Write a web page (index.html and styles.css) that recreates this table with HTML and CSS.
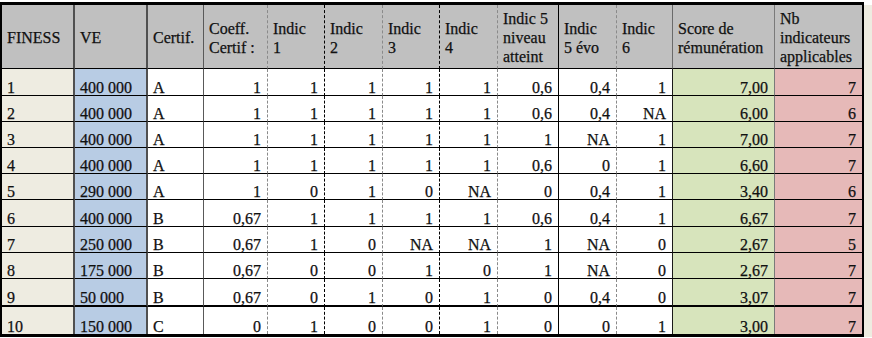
FILE: index.html
```html
<!DOCTYPE html>
<html lang="fr">
<head>
<meta charset="utf-8">
<title>Tableau FINESS</title>
<link rel="stylesheet" href="styles.css">
</head>
<body>
<div class="page">
  <table class="grid">
    <colgroup>
      <col class="w-finess"><col class="w-ve"><col class="w-cert"><col class="w-coeff">
      <col class="w-i1"><col class="w-i2"><col class="w-i3"><col class="w-i4">
      <col class="w-i5n"><col class="w-i5e"><col class="w-i6"><col class="w-score"><col class="w-nb">
    </colgroup>
    <thead>
      <tr class="head">
        <th class="c1">FINESS</th>
        <th class="c2">VE</th>
        <th class="c3">Certif.</th>
        <th class="c4">Coeff.<br>Certif :</th>
        <th class="c5">Indic<br>1</th>
        <th class="c6">Indic<br>2</th>
        <th class="c7">Indic<br>3</th>
        <th class="c8">Indic<br>4</th>
        <th class="c9">Indic 5<br>niveau<br>atteint</th>
        <th class="c10">Indic<br>5 évo</th>
        <th class="c11">Indic<br>6</th>
        <th class="c12">Score de<br>rémunération</th>
        <th class="c13">Nb<br>indicateurs<br>applicables</th>
      </tr>
    </thead>
    <tbody>
      <tr class="r-tall"><td class="c1">1</td><td class="c2">400 000</td><td class="c3">A</td><td class="c4 num">1</td><td class="c5 num">1</td><td class="c6 num">1</td><td class="c7 num">1</td><td class="c8 num">1</td><td class="c9 num">0,6</td><td class="c10 num">0,4</td><td class="c11 num">1</td><td class="c12 num">7,00</td><td class="c13 num">7</td></tr>
      <tr><td class="c1">2</td><td class="c2">400 000</td><td class="c3">A</td><td class="c4 num">1</td><td class="c5 num">1</td><td class="c6 num">1</td><td class="c7 num">1</td><td class="c8 num">1</td><td class="c9 num">0,6</td><td class="c10 num">0,4</td><td class="c11 num">NA</td><td class="c12 num">6,00</td><td class="c13 num">6</td></tr>
      <tr><td class="c1">3</td><td class="c2">400 000</td><td class="c3">A</td><td class="c4 num">1</td><td class="c5 num">1</td><td class="c6 num">1</td><td class="c7 num">1</td><td class="c8 num">1</td><td class="c9 num">1</td><td class="c10 num">NA</td><td class="c11 num">1</td><td class="c12 num">7,00</td><td class="c13 num">7</td></tr>
      <tr><td class="c1">4</td><td class="c2">400 000</td><td class="c3">A</td><td class="c4 num">1</td><td class="c5 num">1</td><td class="c6 num">1</td><td class="c7 num">1</td><td class="c8 num">1</td><td class="c9 num">0,6</td><td class="c10 num">0</td><td class="c11 num">1</td><td class="c12 num">6,60</td><td class="c13 num">7</td></tr>
      <tr><td class="c1">5</td><td class="c2">290 000</td><td class="c3">A</td><td class="c4 num">1</td><td class="c5 num">0</td><td class="c6 num">1</td><td class="c7 num">0</td><td class="c8 num">NA</td><td class="c9 num">0</td><td class="c10 num">0,4</td><td class="c11 num">1</td><td class="c12 num">3,40</td><td class="c13 num">6</td></tr>
      <tr class="r-tall"><td class="c1">6</td><td class="c2">400 000</td><td class="c3">B</td><td class="c4 num">0,67</td><td class="c5 num">1</td><td class="c6 num">1</td><td class="c7 num">1</td><td class="c8 num">1</td><td class="c9 num">0,6</td><td class="c10 num">0,4</td><td class="c11 num">1</td><td class="c12 num">6,67</td><td class="c13 num">7</td></tr>
      <tr><td class="c1">7</td><td class="c2">250 000</td><td class="c3">B</td><td class="c4 num">0,67</td><td class="c5 num">1</td><td class="c6 num">0</td><td class="c7 num">NA</td><td class="c8 num">NA</td><td class="c9 num">1</td><td class="c10 num">NA</td><td class="c11 num">0</td><td class="c12 num">2,67</td><td class="c13 num">5</td></tr>
      <tr><td class="c1">8</td><td class="c2">175 000</td><td class="c3">B</td><td class="c4 num">0,67</td><td class="c5 num">0</td><td class="c6 num">0</td><td class="c7 num">1</td><td class="c8 num">0</td><td class="c9 num">1</td><td class="c10 num">NA</td><td class="c11 num">0</td><td class="c12 num">2,67</td><td class="c13 num">7</td></tr>
      <tr class="r-pre"><td class="c1">9</td><td class="c2">50 000</td><td class="c3">B</td><td class="c4 num">0,67</td><td class="c5 num">0</td><td class="c6 num">1</td><td class="c7 num">0</td><td class="c8 num">1</td><td class="c9 num">0</td><td class="c10 num">0,4</td><td class="c11 num">0</td><td class="c12 num">3,07</td><td class="c13 num">7</td></tr>
      <tr class="r-last"><td class="c1">10</td><td class="c2">150 000</td><td class="c3">C</td><td class="c4 num">0</td><td class="c5 num">1</td><td class="c6 num">0</td><td class="c7 num">0</td><td class="c8 num">1</td><td class="c9 num">0</td><td class="c10 num">0</td><td class="c11 num">1</td><td class="c12 num">3,00</td><td class="c13 num">7</td></tr>
    </tbody>
  </table>
  <div class="edge"></div>
</div>
</body>
</html>
```
FILE: styles.css
```css
html, body {
  margin: 0;
  padding: 0;
  background: #ffffff;
}

.page {
  display: flex;
  align-items: flex-start;
  padding-top: 2px;
  width: 872px;
}

.edge {
  flex: 1;
  align-self: stretch;
  margin-top: 3px;
  background: #eeece1;
}

.grid {
  width: 864px;
  table-layout: fixed;
  border-collapse: separate;
  border-spacing: 0;
  border-top: 3px solid #000;
  border-left: 2px solid #000;
  border-right: 2px solid #000;
  border-bottom: 3px solid #000;
  box-shadow: 0 1px 0 #9a9a9a;
  color: #000;
  flex: none;
}

.grid th,
.grid td {
  font-family: 'Liberation Serif', 'Times New Roman', serif;
  font-size: 16px;
  color: #111;
  -webkit-text-stroke: 0.25px #111;
  padding: 0 6px 0 5px;
  border-bottom: 1px solid #000;
  border-right: 1px solid #000;
  overflow: hidden;
  white-space: nowrap;
}

.w-finess { width: 73px; }
.w-ve { width: 73px; }
.w-cert { width: 56px; }
.w-coeff { width: 64px; }
.w-i1 { width: 57px; }
.w-i2 { width: 58px; }
.w-i3 { width: 57px; }
.w-i4 { width: 58px; }
.w-i5n { width: 61px; }
.w-i5e { width: 58px; }
.w-i6 { width: 56px; }
.w-score { width: 102px; }
.w-nb { width: 87px; }

.grid th {
  background: #c0c0c0;
  font-weight: normal;
  text-align: left;
  vertical-align: middle;
  line-height: 19px;
  padding-top: 2px;
}

.head { height: 64px; }

.grid td {
  vertical-align: bottom;
  line-height: 14px;
  text-align: left;
  background: #fff;
}

.grid tbody tr { height: 26px; }
.grid tbody tr.r-tall { height: 27px; }
.grid tbody tr.r-pre { height: 28px; }
.grid tbody tr.r-last { height: 27px; }
.grid tbody tr.r-pre td { border-bottom-width: 2px; }
.grid tbody tr.r-last td { border-bottom: 0; }

.grid td.num { text-align: right; }

/* column separators */
.grid .c1 { border-right: 2px solid #505050; }
.grid .c2 { border-right: 2px solid #505050; }
.grid .c3 { border-right: 1px solid #595959; }
.grid .c4 { border-right: 1px dashed #8a8a8a; }
.grid .c5 { border-right: 1px dashed #000; }
.grid .c6 { border-right: 1px dashed #8a8a8a; }
.grid .c7 { border-right: 1px dashed #000; }
.grid .c8 { border-right: 1px dashed #8a8a8a; }
.grid .c9 { border-right: 1px solid #000; }
.grid .c10 { border-right: 1px dashed #8a8a8a; }
.grid .c11 { border-right: 1px solid #1a1a1a; }
.grid .c12 { border-right: 1px solid #7a7a7a; }
.grid .c13 { border-right: 0; }

.grid th.c11 { border-right-color: #6a6a6a; }

/* column fills */
.grid td.c1 { background: #eeece1; }
.grid td.c2 { background: #b8cce4; }
.grid td.c12 { background: #d7e4bc; }
.grid td.c13 { background: #e6b9b8; }
```
